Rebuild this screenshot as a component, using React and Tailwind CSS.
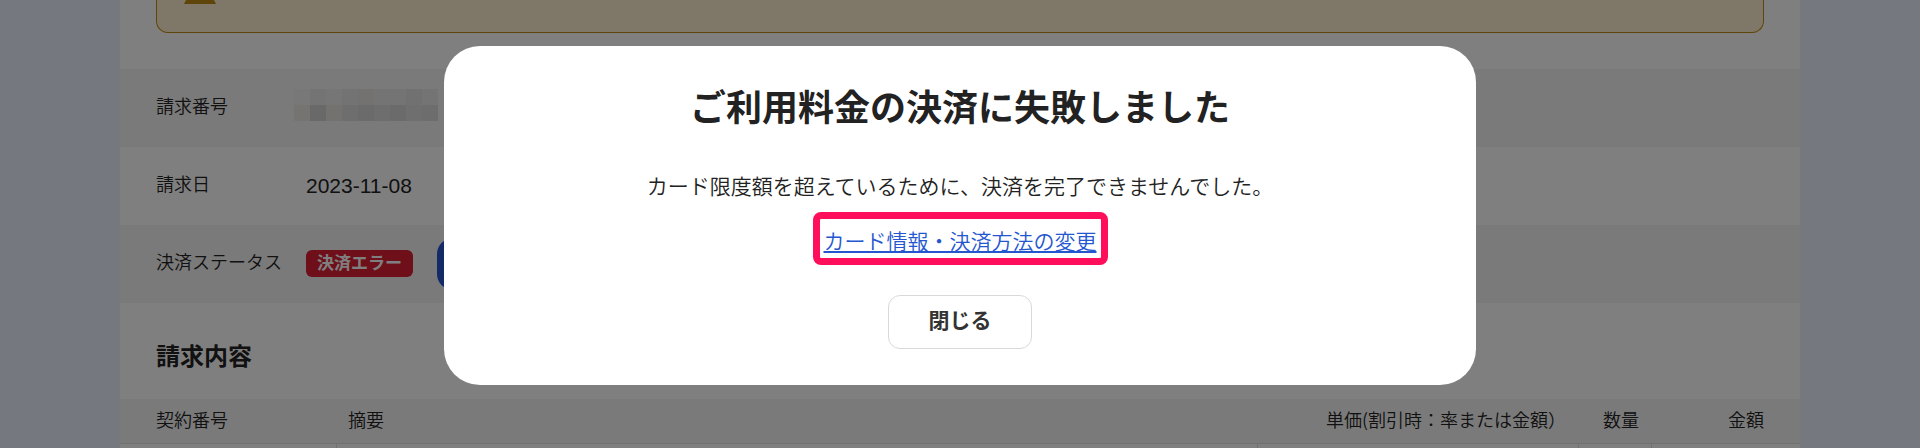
import { useState } from "react";

const invoiceColumns = [
  { label: "契約番号", className: "w-[216px] pl-9 pr-3 text-left" },
  { label: "摘要", className: "px-3 text-left" },
  { label: "単価(割引時：率または金額）", className: "w-[321px] px-3 text-right" },
  { label: "数量", className: "w-[73px] px-3 text-right" },
  { label: "金額", className: "w-[149px] pl-3 pr-9 text-right" },
];

// One entry for each block of the masked invoice number
const maskedBlocks = [
  "bg-[#f1f1f1]", "bg-[#e9e9e9]", "bg-[#ececec]", "bg-[#e7e7e7]", "bg-[#e9e5e2]", "bg-[#e9e9e9]", "bg-[#e8e8e8]", "bg-[#e2e2e2]", "bg-[#e9e9e9]",
  "bg-[#ece8e3]", "bg-[#d2d2d2]", "bg-[#e8e4df]", "bg-[#dcdcdc]", "bg-[#d7d7d7]", "bg-[#dcdcdc]", "bg-[#d6d6d6]", "bg-[#dfdfdf]", "bg-[#dadada]",
];

function DetailRow({ label, shaded, children }) {
  return (
    <div className={`flex h-[78px] items-center px-9 ${shaded ? "bg-[#f5f5f5]" : "bg-white"}`}>
      <dt className="w-[150px] shrink-0 pb-1.5 text-lg">{label}</dt>
      <dd className="flex items-center gap-6">{children}</dd>
    </div>
  );
}

function PaymentErrorDialog({ onClose }) {
  return (
    <div className="fixed inset-0 flex items-start justify-center bg-black/50 px-6 pt-[46px]">
      <div
        role="dialog"
        aria-modal="true"
        aria-labelledby="dialog-title"
        className="flex w-full max-w-[1032px] flex-col items-center rounded-[36px] bg-white px-9 pt-[35px] pb-9 text-[#222]"
      >
        <h1 id="dialog-title" className="text-4xl leading-[48px] font-bold">
          ご利用料金の決済に失敗しました
        </h1>
        <p className="mt-10 text-[21px] leading-8">
          カード限度額を超えているために、決済を完了できませんでした。
        </p>
        <div className="mt-[11px] rounded-lg border-7 border-[#ff0f5b] px-1 pt-1">
          <a
            href="#payment"
            className="block text-[21px] leading-[35px] text-[#2457cf] underline decoration-2 underline-offset-2"
          >
            カード情報・決済方法の変更
          </a>
        </div>
        <button
          type="button"
          onClick={onClose}
          className="mt-[30px] h-[54px] w-36 rounded-xl border border-[#d9d9d9] bg-white pb-1 text-[21px] font-bold text-[#333]"
        >
          閉じる
        </button>
      </div>
    </div>
  );
}

export default function App() {
  const [dialogOpen, setDialogOpen] = useState(true);

  return (
    <div className="h-screen overflow-hidden bg-[#ebf1ff] px-[120px] font-['Noto_Sans_CJK_JP',sans-serif] font-[350] text-[#222]">
      <main className="min-h-full bg-white">
        {/* Warning banner */}
        <div className="px-9 pb-9">
          <div className="h-[33px] rounded-b-xl border border-t-0 border-[#c08a14] bg-[#ffefd0] px-[26px]">
            <svg width="34" height="4" viewBox="0 0 34 4" aria-hidden="true">
              <path d="M3 0H31L33 4H1Z" fill="#c08a14" />
            </svg>
          </div>
        </div>

        <dl>
          <DetailRow label="請求番号" shaded>
            <div className="-ml-3 grid grid-cols-9 pb-1.5" aria-hidden="true">
              {maskedBlocks.map((color, i) => (
                <span key={i} className={`size-4 ${color}`} />
              ))}
            </div>
          </DetailRow>
          <DetailRow label="請求日">
            <span className="font-['Liberation_Sans',sans-serif] text-[21px] font-normal">2023-11-08</span>
          </DetailRow>
          <DetailRow label="決済ステータス" shaded>
            <span className="mb-0.5 flex h-[27px] w-[107px] items-center justify-center rounded-md bg-[#dc1e34] pb-0.5 text-[17px] font-bold text-white">
              決済エラー
            </span>
            <button
              type="button"
              className="h-[52px] w-48 rounded-2xl bg-[#2457cf]"
              aria-label="決済方法の変更"
            />
          </DetailRow>
        </dl>

        <h2 className="px-9 pt-[34px] pb-[26px] text-2xl leading-9 font-bold">請求内容</h2>

        <table className="w-full table-fixed border-collapse text-lg">
          <thead className="bg-[#f5f5f5]">
            <tr className="h-11 border-b border-[#e2e2e2]">
              {invoiceColumns.map(({ label, className }) => (
                <th key={label} scope="col" className={`pb-1 font-[350] whitespace-nowrap ${className}`}>
                  {label}
                </th>
              ))}
            </tr>
          </thead>
          <tbody>
            <tr className="h-16">
              {invoiceColumns.map(({ label }) => (
                <td key={label} className="border-r border-[#e2e2e2] last:border-r-0" />
              ))}
            </tr>
          </tbody>
        </table>
      </main>

      {dialogOpen && <PaymentErrorDialog onClose={() => setDialogOpen(false)} />}
    </div>
  );
}
